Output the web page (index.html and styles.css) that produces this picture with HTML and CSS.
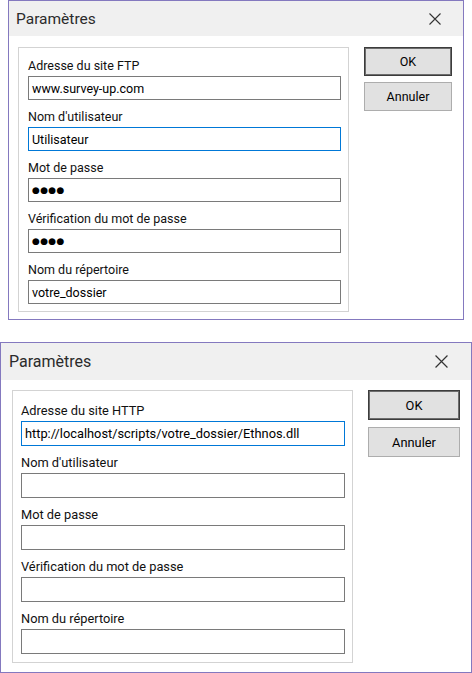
FILE: index.html
```html
<!DOCTYPE html>
<html lang="fr">
<head>
<meta charset="utf-8">
<title>Paramètres</title>
<link rel="stylesheet" href="styles.css">
</head>
<body>
<div class="page">
  <section class="dialog d1">
    <header class="titlebar">
      <span class="title">Paramètres</span>
      <svg class="close" viewBox="0 0 12 12" width="12" height="12"><path d="M0.5 0.5L11.5 11.5M11.5 0.5L0.5 11.5" stroke="#333" stroke-width="1.1" fill="none"/></svg>
    </header>
    <div class="body">
      <div class="group">
        <div class="row"><div class="label">Adresse du site FTP</div><div class="field">www.survey-up.com</div></div>
        <div class="row"><div class="label">Nom d'utilisateur</div><div class="field focus">Utilisateur</div></div>
        <div class="row"><div class="label">Mot de passe</div><div class="field"><span class="dots">●●●●</span></div></div>
        <div class="row"><div class="label">Vérification du mot de passe</div><div class="field"><span class="dots">●●●●</span></div></div>
        <div class="row"><div class="label">Nom du répertoire</div><div class="field">votre_dossier</div></div>
      </div>
      <div class="buttons">
        <div class="btn default">OK</div>
        <div class="btn">Annuler</div>
      </div>
    </div>
  </section>

  <section class="dialog d2">
    <header class="titlebar">
      <span class="title">Paramètres</span>
      <svg class="close" viewBox="0 0 12 12" width="13" height="13"><path d="M0.5 0.5L11.5 11.5M11.5 0.5L0.5 11.5" stroke="#333" stroke-width="1.1" fill="none"/></svg>
    </header>
    <div class="body">
      <div class="group">
        <div class="row"><div class="label">Adresse du site HTTP</div><div class="field focus">http://localhost/scripts/votre_dossier/Ethnos.dll</div></div>
        <div class="row"><div class="label">Nom d'utilisateur</div><div class="field"></div></div>
        <div class="row"><div class="label">Mot de passe</div><div class="field"></div></div>
        <div class="row"><div class="label">Vérification du mot de passe</div><div class="field"></div></div>
        <div class="row"><div class="label">Nom du répertoire</div><div class="field"></div></div>
      </div>
      <div class="buttons">
        <div class="btn default">OK</div>
        <div class="btn">Annuler</div>
      </div>
    </div>
  </section>
</div>
</body>
</html>
```

FILE: styles.css
```css
* { box-sizing: border-box; }
html, body { margin: 0; padding: 0; background: #fff; }
body {
  font-family: Roboto, "Open Sans", "Liberation Sans", sans-serif;
  color: #000;
  width: 472px;
  height: 673px;
  overflow: hidden;
}
.page {
  display: flex;
  flex-direction: column;
  gap: 22px;
}
.dialog {
  background: #fff;
  border: 1px solid #8479bf;
  display: flex;
  flex-direction: column;
}
.d1 { margin-left: 8px; width: 456px; height: 320px; font-size: 12.5px; }
.d2 { width: 472px; height: 331px; font-size: 12.8px; }

.titlebar {
  background: #f0f0f0;
  display: flex;
  align-items: center;
  justify-content: space-between;
}
.d1 .titlebar { height: 35px; padding: 0 22px 0 7px; }
.d2 .titlebar { height: 37px; padding: 0 23px 0 8px; }
.title { font-size: 15.5px; color: #2b2b2b; }
.d2 .title { font-size: 16px; }

.body { display: flex; align-items: flex-start; }
.d1 .body { padding: 11px 11px 0 9px; gap: 15px; }
.d2 .body { padding: 10px 10px 0 11px; gap: 15px; }

.group {
  border: 1px solid #d3d3d3;
  box-shadow: inset 0 0 0 1px #fff;
  display: flex;
  flex-direction: column;
}
.d1 .group { width: 331px; height: 265px; padding: 8px 7px 0 9px; gap: 7px; }
.d2 .group { width: 341px; height: 273px; padding: 9px 7px 0 8px; gap: 6px; }

.row { display: flex; flex-direction: column; }
.label { white-space: nowrap; color: #111; }
.d1 .label { height: 20px; line-height: 20px; }
.d2 .label { height: 21px; line-height: 21px; }

.field {
  border: 1px solid #7a7a7a;
  background: #fff;
  padding: 0 3px;
  display: flex;
  align-items: center;
  white-space: nowrap;
  overflow: hidden;
}
.d1 .field { height: 24px; }
.d2 .field { height: 25px; }
.field.focus { border-color: #0078d7; }
.dots { font-family: "DejaVu Sans", sans-serif; font-size: 9px; letter-spacing: 0.3px; }

.buttons { display: flex; flex-direction: column; }
.d1 .buttons { width: 88px; gap: 6px; }
.d2 .buttons { width: 92px; gap: 7px; }
.btn {
  background: #e1e1e1;
  border: 1px solid #adadad;
  display: flex;
  align-items: center;
  justify-content: center;
}
.d1 .btn { height: 29px; }
.d2 .btn { height: 30px; }
.btn.default { border: 1px solid #3c3c3c; box-shadow: inset 0 0 0 1px #6d6d6d; }
```
